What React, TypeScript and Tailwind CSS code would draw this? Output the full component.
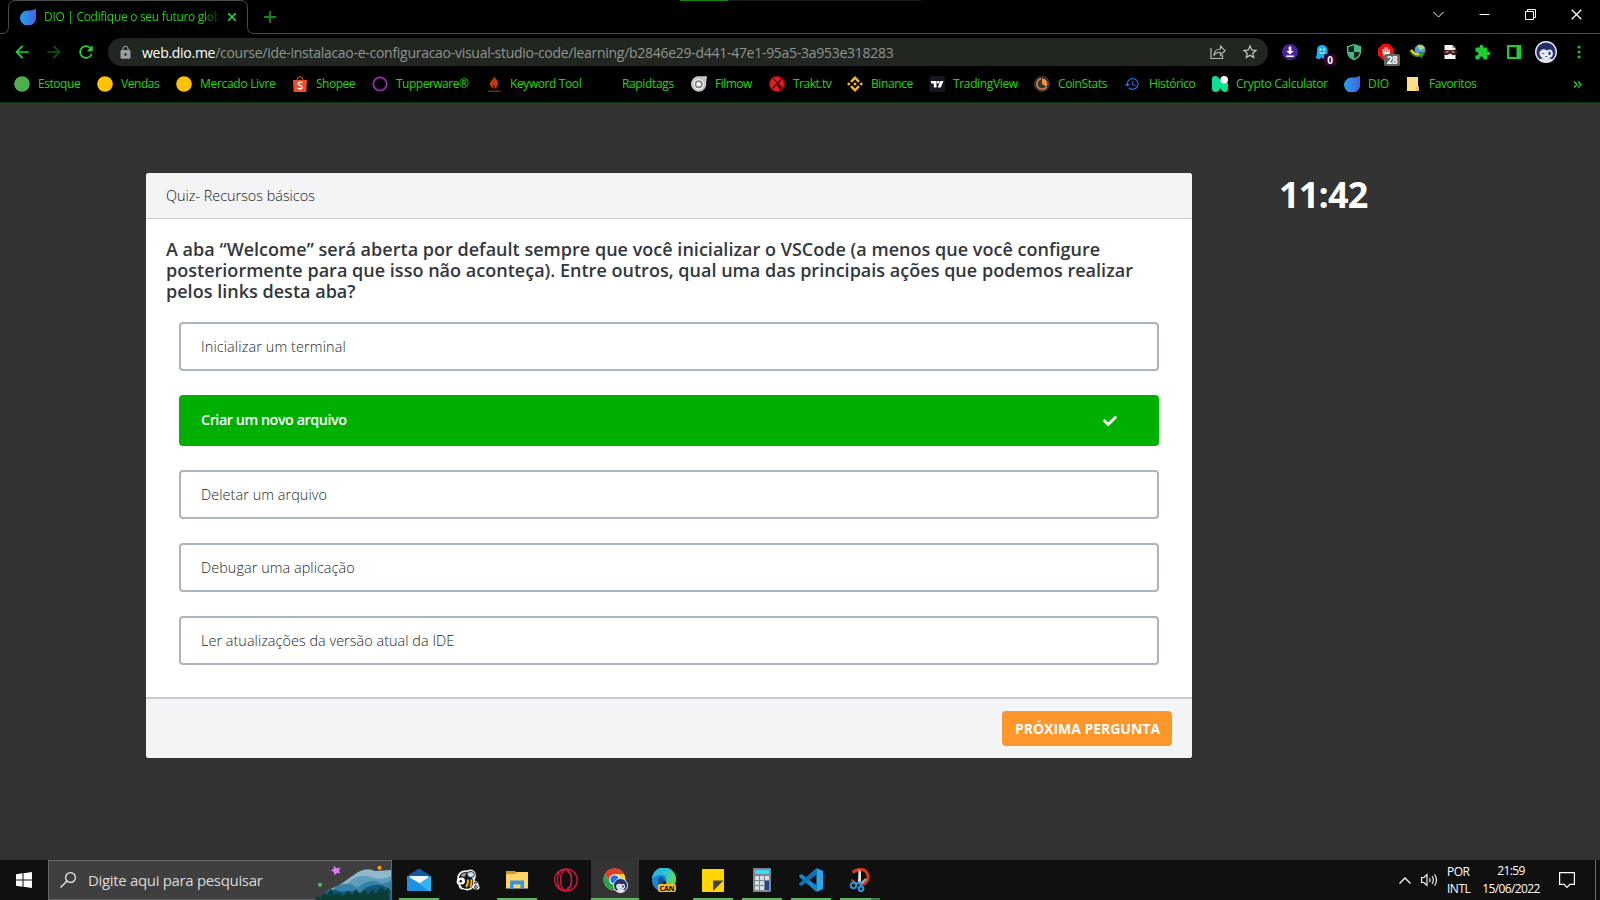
import type { ReactNode } from "react";
import { FaCheck } from "react-icons/fa";
import { MdArrowBack, MdArrowForward, MdExtension, MdHistory, MdLock, MdRefresh, MdStarOutline } from "react-icons/md";
import { SiBinance } from "react-icons/si";

function Drop({ id }: { id: string }) {
  return (
    <svg width="16" height="16" viewBox="0 0 16 16" className="shrink-0">
      <defs>
        <linearGradient id={id} x1="0" x2="1">
          <stop offset="0" stopColor="#1fa2f0" />
          <stop offset="1" stopColor="#4a63dc" />
        </linearGradient>
      </defs>
      <path d="M16 0v8.2a8 7.6 0 1 1-9.6-6.6c2-.4 3 .3 5.200-.3C13.500.8 14.500.1 16 0z" fill={`url(#${id})`} />
    </svg>
  );
}

function Avatar({ size }: { size: number }) {
  return (
    <svg width={size} height={size} viewBox="0 0 22 22">
      <circle cx="11" cy="11" r="10.300" fill="#22306b" stroke="#e6e9f4" strokeWidth="1.400" />
      <path d="M4 18.500Q11 15 18 18.500Q15 21.500 11 21.500Q7 21.500 4 18.500z" fill="#dfe3f0" />
      <path d="M4.500 11Q6 8.500 9 8L12 9.500Q15 7.500 17 9.500Q19 13.500 16.500 16Q12 19 7.500 17Q4 15 4.500 11z" fill="#e9e8f0" />
      <ellipse cx="14.500" cy="12.300" rx="1.200" ry="1.900" fill="#2b3a86" />
      <path d="M6.800 12.800q1.300-1 2.600 0M10.300 15.500h2" stroke="#3a4478" strokeWidth=".9" fill="none" />
    </svg>
  );
}

const circle = (fill: string) => (
  <svg width="16" height="16">
    <circle cx="8" cy="8" r="7.800" fill={fill} />
  </svg>
);

const bookmarks: { label: string; width: string; track: string; icon: ReactNode }[] = [
  { label: "Estoque", width: "w-[83px]", track: "tracking-[-0.45px]", icon: circle("#4caf50") },
  { label: "Vendas", width: "w-[79px]", track: "tracking-[-0.45px]", icon: circle("#ffc107") },
  { label: "Mercado Livre", width: "w-[116px]", track: "tracking-[-0.3px]", icon: circle("#ffc107") },
  {
    label: "Shopee",
    width: "w-[80px]",
    track: "tracking-[-0.5px]",
    icon: (
      <svg width="16" height="16" viewBox="0 0 16 16">
        <path d="M1 4h14l-.7 12H1.700z" fill="#ee4d2d" />
        <path d="M5 4a3 3.400 0 0 1 6 0" fill="none" stroke="#ee4d2d" />
        <path d="M10.300 6.800Q8 5.300 6.300 6.900C5.200 9.600 10.700 9 10.200 11.600Q8.700 14.200 5.500 12" fill="none" stroke="#fff" strokeWidth="1.300" />
      </svg>
    ),
  },
  {
    label: "Tupperware®",
    width: "w-[114px]",
    track: "tracking-[-0.5px]",
    icon: (
      <svg width="16" height="16">
        <circle cx="8" cy="8" r="6.700" fill="none" stroke="#9c27b0" strokeWidth="1.800" />
      </svg>
    ),
  },
  {
    label: "Keyword Tool",
    width: "w-[112px]",
    track: "tracking-[-0.4px]",
    icon: (
      <svg width="16" height="16" viewBox="0 0 16 16">
        <path d="M8.300 0c.3 2.700 3.700 3.800 3.700 7.300 0 2.700-1.500 4.400-3.600 5.700.2-2 .2-3-.7-4.200-.5 1.300-.5 2.600.1 4C4.800 11.500 3.800 9.500 4 7.500 4.300 4.400 7.700 3.500 8.300 0z" fill="#c4390a" />
        <path d="M2 15.200h12.500" stroke="#a83208" strokeWidth="1.100" />
      </svg>
    ),
  },
  { label: "Rapidtags", width: "w-[93px]", track: "tracking-[-0.35px]", icon: null },
  {
    label: "Filmow",
    width: "w-[78px]",
    track: "tracking-[-0.5px]",
    icon: (
      <svg width="16" height="16" viewBox="0 0 16 16">
        <path d="M6 .3h10l-.8 6.500A7.600 7.800 0 1 1 6 .3z" fill="#c6c6c6" />
        <circle cx="7.700" cy="8.300" r="4.600" fill="#808080" stroke="#f5f5f5" strokeWidth="1.200" />
        <circle cx="7.700" cy="8.300" r="2.300" fill="#fff" />
      </svg>
    ),
  },
  {
    label: "Trakt.tv",
    width: "w-[78px]",
    track: "tracking-[-0.5px]",
    icon: (
      <svg width="16" height="16" viewBox="0 0 16 16">
        <circle cx="8" cy="8" r="7.400" fill="#ed1c24" stroke="#9b1016" strokeWidth="1.200" />
        <path d="M4.500 3l5 5 4 4.500M12.500 3L3.500 12.500M8 8.500l4 5" stroke="#47060a" strokeWidth="1.400" fill="none" />
      </svg>
    ),
  },
  { label: "Binance", width: "w-[82px]", track: "tracking-[-0.4px]", icon: <SiBinance size={16} color="#f3ba2f" /> },
  {
    label: "TradingView",
    width: "w-[105px]",
    track: "tracking-[-0.35px]",
    icon: (
      <svg width="16" height="16" viewBox="0 0 16 16">
        <rect width="16" height="16" rx="2.500" fill="#131722" />
        <path d="M2 5h5.500v6.500H4.800V7.600H2zM11.300 5h3.200l-2.700 6.500H8.700z" fill="#fff" />
        <circle cx="9.200" cy="6.300" r="1.300" fill="#fff" />
      </svg>
    ),
  },
  {
    label: "CoinStats",
    width: "w-[91px]",
    track: "tracking-[-0.4px]",
    icon: (
      <svg width="16" height="16" viewBox="0 0 16 16">
        <circle cx="8" cy="8" r="8" fill="#353535" />
        <path d="M8 8V2.600A5.400 5.400 0 0 1 12.600 10.800z" fill="#ff9332" />
        <path d="M7 2.800A5.300 5.300 0 1 0 12.500 11" fill="none" stroke="#f47a3c" strokeWidth="1.500" />
      </svg>
    ),
  },
  { label: "Histórico", width: "w-[87px]", track: "tracking-[-0.4px]", icon: <MdHistory size={16} color="#1a73e8" className="-ml-px" /> },
  {
    label: "Crypto Calculator",
    width: "w-[132px]",
    track: "tracking-[-0.3px]",
    icon: (
      <svg width="16" height="16" viewBox="0 0 16 16">
        <path d="M0 3Q0 0 3 0Q6 0 8 3.500L16 7V13Q16 16 13 16Q10 16 8 12Q7 16 4 16Q0 16 0 13z" fill="#0bdf91" />
        <circle cx="12.200" cy="3.800" r="3.800" fill="#fff" />
      </svg>
    ),
  },
  { label: "DIO", width: "w-[61px]", track: "tracking-[-0.2px]", icon: <Drop id="dio-bookmark" /> },
  {
    label: "Favoritos",
    width: "w-[80px]",
    track: "tracking-[-0.45px]",
    icon: (
      <svg width="16" height="16" viewBox="0 0 16 16">
        <path d="M2 1h11v9.500h1V15H2z" fill="#ffe08a" />
        <path d="M11 15v-3.500l3-1V15z" fill="#f0bd49" />
      </svg>
    ),
  },
];

const extensions: ReactNode[] = [
  <svg key="download" width="16" height="16" viewBox="0 0 16 16">
    <circle cx="8" cy="8" r="8" fill="#4a2298" />
    <path d="M6.700 2.500h2.600v4.500h2.400L8 10.600 4.300 7h2.400zM4.300 11.500h7.400v1.400H4.300z" fill="#fff" />
  </svg>,
  <span key="ghost" className="relative">
    <svg width="16" height="16" viewBox="0 0 16 16">
      <path d="M3 6q.3-5 5-5t5.500 5v9l-2-1.500L9.500 15l-2-1.500L5 15.200 1.500 14Q3 12 3 6z" fill="#15aef0" />
      <circle cx="6.500" cy="5.500" r="1.100" fill="#fff" />
      <circle cx="10.200" cy="5.500" r="1.100" fill="#fff" />
      <path d="M5.500 8.300q2.800 2.700 5.400 0" stroke="#fff" fill="none" />
    </svg>
    <span className="absolute top-[10px] left-[10px] flex h-3 w-3 items-center justify-center rounded-[2px] bg-[#330033] text-[10px] leading-none font-bold text-white">0</span>
  </span>,
  <svg key="shield" width="16" height="16" viewBox="0 0 16 16">
    <path d="M8 .7l6.300 2V8Q14.300 13 8 15.500Q1.700 13 1.700 8V2.700z" fill="#0a2419" stroke="#48c78a" strokeWidth="1.400" />
    <path d="M8 3.500V8H4V4.500zM8 8h4.200q-.2 3.500-4.200 5.200z" fill="#0a2419" />
    <path d="M8 1v7h6V3zM8 8H2q.5 4.500 6 7z" fill="#48b883" />
  </svg>,
  <span key="hand" className="relative">
    <svg width="16" height="16" viewBox="0 0 16 16">
      <path d="M4.700 0h6.600L16 4.700v6.600L11.300 16H4.700L0 11.300V4.700z" fill="#e8100f" />
      <path d="M5.200 8.500V5M7.200 8V3.500M9.200 8V3.500M11.200 9V5" stroke="#fff" strokeWidth="1.300" />
      <path d="M4.600 8h7.300l-1 5H6z" fill="#fff" />
    </svg>
    <span className="absolute top-[10px] left-[6px] flex h-3 w-4 items-center justify-center rounded-[2px] bg-[#666] text-[10px] leading-none font-bold tracking-[-0.4px] text-white">28</span>
  </span>,
  <svg key="globe" width="16" height="16" viewBox="0 0 16 16">
    <circle cx="10" cy="6" r="5.500" fill="#4f9be5" />
    <path d="M8 .8q5-.5 6.500 3L11 6.500 8 4z" fill="#a9d96b" />
    <path d="M1 6q4 7 12 4" stroke="#e9d23f" strokeWidth="2.600" fill="none" />
    <path d="M.5 8q5 7 12 2.500" stroke="#3c7f2e" strokeWidth="1.500" fill="none" />
    <path d="M8.500 8.500l6.500-1-3.500 7z" fill="#2d952b" />
  </svg>,
  <svg key="mask" width="16" height="16" viewBox="0 0 16 16">
    <path d="M2.500 1h8l3 3v11h-11z" fill="#f4f4f4" />
    <path d="M10.500 1v3h3z" fill="#888" />
    <path d="M.8 5.500q7 1.500 14.400 0v4.300q-2.500 2.500-5.500.7L8 9.500l-1.700 1Q3 12 .8 9.800z" fill="#3b1414" />
    <path d="M3.500 8h3M9.500 8h3" stroke="#e8dcdc" strokeWidth="1.200" />
  </svg>,
  <MdExtension key="puzzle" size={17} color="#1dce32" />,
  <svg key="panel" width="14" height="14">
    <path d="M0 0h14v14H0zM2 2v10h7.500V2z" fill="#1dce32" fillRule="evenodd" />
  </svg>,
  <Avatar key="avatar" size={22} />,
  <svg key="dots" width="4" height="14" fill="#14be28" className="ml-px">
    <circle cx="2" cy="2" r="1.600" />
    <circle cx="2" cy="7" r="1.600" />
    <circle cx="2" cy="12" r="1.600" />
  </svg>,
];

const options = [
  { text: "Inicializar um terminal", track: "tracking-[0.13px]", correct: false },
  { text: "Criar um novo arquivo", track: "", correct: true },
  { text: "Deletar um arquivo", track: "tracking-[0.08px]", correct: false },
  { text: "Debugar uma aplicação", track: "tracking-[0.07px]", correct: false },
  { text: "Ler atualizações da versão atual da IDE", track: "tracking-[0.05px]", correct: false },
];

const apps: { name: string; open: boolean; icon: ReactNode }[] = [
  {
    name: "mail",
    open: true,
    icon: (
      <svg width="24" height="24" viewBox="0 0 24 24">
        <path d="M0 8L12 .5 24 8v4H0z" fill="#0f5aa6" />
        <path d="M2.500 8h19v8h-19z" fill="#f3f6f8" />
        <path d="M0 8l13 7.500L24 8v15H0z" fill="#1c93e2" />
        <path d="M24 8L12 15.500 22 23h2z" fill="#34b4f1" />
      </svg>
    ),
  },
  {
    name: "bee",
    open: false,
    icon: (
      <svg width="26" height="24" viewBox="0 0 26 24">
        <path d="M4 5Q7 1.500 12 2.500Q17 0 20 4Q22 8 19.500 12.500Q24 14 23.500 17Q26 20 23 21.500Q20 22 18 20Q14 24 9 21.500Q4 22 3.500 17Q.5 15 2 12Q1.500 8 4 5z" fill="#f0f0f0" />
        <path d="M4 9Q6 3.500 12 4L18 11.500Q19 17 16 19.500Q12 22 7 19.500Q4 15 4 9z" fill="#161616" />
        <path d="M5.500 8q2.500-4 6-3l-2 4z" fill="#9b9b9b" />
        <circle cx="6.500" cy="13" r="3.500" fill="#fff" />
        <circle cx="5.800" cy="13.300" r="1.300" fill="#111" />
        <ellipse cx="15.800" cy="6.500" rx="3.600" ry="3" fill="#c9dff0" stroke="#222" />
        <path d="M12.800 11.500q.8 4-1.800 7.500M16.300 11.500q.8 4-1 7.500" stroke="#f4b81c" strokeWidth="1.900" fill="none" />
        <circle cx="21" cy="19" r="1.400" fill="#fff" stroke="#222" />
        <circle cx="20.500" cy="14.800" r="1" fill="#fff" stroke="#222" />
      </svg>
    ),
  },
  {
    name: "files",
    open: true,
    icon: (
      <svg width="22" height="20" viewBox="0 0 22 20">
        <path d="M0 1h9l2 2v4H0z" fill="#d99a10" />
        <path d="M0 4h9l2-2h11v16.500H0z" fill="#ffd569" />
        <path d="M4 19v-8.500h14V19h-3.500v-4.500h-7V19z" fill="#3a95dd" />
      </svg>
    ),
  },
  {
    name: "opera",
    open: false,
    icon: (
      <svg width="24" height="24" viewBox="0 0 24 24" fill="none" stroke="#d6183f" strokeWidth="1.300">
        <circle cx="12" cy="12" r="11.200" />
        <ellipse cx="12" cy="12" rx="5.500" ry="10.500" />
        <path d="M13 3.500q4.500 1 4.500 8.500T13 20.500M9 1.500Q3.500 4 3.500 12T9 22.500" />
      </svg>
    ),
  },
  {
    name: "chrome",
    open: true,
    icon: (
      <span className="relative block h-6 w-6">
        <svg width="24" height="24" viewBox="0 0 24 24">
          <circle cx="11.500" cy="11.500" r="11" fill="#ffcd40" />
          <path d="M1.970 6A11 11 0 0 1 21.030 6H11.500L7 14z" fill="#e33b2e" />
          <path d="M1.970 6A11 11 0 0 0 10.500 22.500L16 14l-9 0z" fill="#2ba14b" />
          <circle cx="11.500" cy="11.500" r="5.300" fill="#fff" />
          <circle cx="11.500" cy="11.500" r="4.200" fill="#1a73e8" />
        </svg>
        <span className="absolute top-[10px] left-[10px]">
          <Avatar size={15} />
        </span>
      </span>
    ),
  },
  {
    name: "edge",
    open: false,
    icon: (
      <span className="relative block h-6 w-6">
        <svg width="24" height="24" viewBox="0 0 24 24">
          <defs>
            <linearGradient id="edge-wave" x1="0" y1="0" x2="1" y2=".6">
              <stop offset="0" stopColor="#2fa8ea" />
              <stop offset=".55" stopColor="#2dc4d4" />
              <stop offset="1" stopColor="#62d84e" />
            </linearGradient>
          </defs>
          <circle cx="12" cy="12" r="12" fill="#1c86d6" />
          <path d="M6 12Q5 20 12 24Q18 24 21 20Q12 20 12 13Q12 9 9 8.500Q6.500 9 6 12z" fill="#0f52a0" />
          <path d="M0 11A12 12 0 0 1 24 11.500Q24 17 18 17Q13 17 14 14Q16 8 10 7Q3 6.500 0 11z" fill="url(#edge-wave)" />
          <path d="M14.200 13q-1.500 2.500 1.300 4H12q-2-5 2.200-4z" fill="#101010" />
        </svg>
        <span className="absolute top-[16px] left-[6px] flex h-2 w-[18px] items-center justify-center rounded-[2px] bg-[#ffb923] text-[7px] leading-none font-bold text-black">CAN</span>
      </span>
    ),
  },
  {
    name: "notes",
    open: true,
    icon: (
      <svg width="22" height="23" viewBox="0 0 22 23">
        <rect width="22" height="23" rx="1" fill="#ffd600" />
        <path d="M11 11.500h10.500L11 22z" fill="#44443c" />
      </svg>
    ),
  },
  {
    name: "calculator",
    open: true,
    icon: (
      <svg width="18" height="24" viewBox="0 0 18 24">
        <rect width="18" height="24" rx="1" fill="#7d8790" />
        <rect x="2" y="2" width="14" height="4" fill="#46d5f6" />
        <path d="M2 8h4v4H2zM7 8h4v4H7zM12 8h4v4h-4zM2 13h4v4H2zM7 13h4v4H7zM2 18h4v4H2zM7 18h4v4H7z" fill="#d7dee3" />
        <path d="M12 13h4v9h-4z" fill="#1a4a8c" />
      </svg>
    ),
  },
  {
    name: "code",
    open: true,
    icon: (
      <svg width="24" height="24" viewBox="0 0 24 24">
        <path d="M17.500 24v-6.500L2.500 6 .2 7.500v1.300z" fill="#128bd6" />
        <path d="M17.500 0v6.500L2.500 18 .2 16.500v-1.300z" fill="#0a72ba" />
        <path d="M17.500 0L24 3v18l-6.500 3z" fill="#2ba3ef" />
      </svg>
    ),
  },
  {
    name: "snip",
    open: true,
    icon: (
      <svg width="22" height="24" viewBox="0 0 22 24">
        <path d="M3.500 4.500Q10-.5 16 2.500Q21 7 18 13Q16 16.500 11 16.500" stroke="#d63a15" strokeWidth="3" fill="none" />
        <path d="M9.500 1.500l2.500 2v11h-3z" fill="#dce2e5" />
        <path d="M3 11l5.500 4L8 17 2 12.500z" fill="#c5482a" />
        <path d="M16.500 10L10 16l1.500 1.500L17.500 12z" fill="#a9b2b7" />
        <g fill="none" stroke="#2a93dc" strokeWidth="2">
          <circle cx="4.500" cy="17.500" r="2.700" />
          <circle cx="12" cy="20.800" r="2.300" />
          <path d="M7 16l4-1.500 1.500 4" />
        </g>
      </svg>
    ),
  },
];

function Browser() {
  return (
    <header className="h-[103px] shrink-0 border-b border-[#0c3a0e] bg-black text-[12px] text-[#22d80d]">
      <div className="relative flex h-[34px] border-b border-[#4b4b4b]">
        <div className="absolute top-0 left-[680px] flex h-px w-[241px] bg-[#1c1c1c]">
          <div className="w-[48px] bg-[#0d850f]" />
        </div>
        <svg width="256" height="34" className="absolute top-0 left-0" fill="none">
          <path d="M0 33.500H2q6.500 0 6.500-7V8q0-7.500 7.500-7.500h224q7.500 0 7.500 7.500v18.500q0 7 7 7H256V40H0z" fill="#000" stroke="#4b4b4b" />
        </svg>
        <div className="relative flex h-[34px] w-[248px] items-center pl-5">
          <Drop id="dio-tab" />
          <span className="ml-2 w-[176px] overflow-hidden bg-gradient-to-r from-[#22d80d] from-[90%] to-transparent to-[101%] bg-clip-text tracking-[-0.3px] whitespace-nowrap text-transparent">DIO | Codifique o seu futuro glob</span>
          <svg width="8" height="8" className="ml-[8px]" stroke="#1dd62b" strokeWidth="1.600">
            <path d="M0 0l8 8M8 0L0 8" />
          </svg>
        </div>
        <svg width="12" height="12" className="mt-[11px] ml-4" stroke="#0e8a18" strokeWidth="1.800">
          <path d="M6 0v12M0 6h12" />
        </svg>
        <div className="mr-px ml-auto flex h-[28px] items-center text-white">
          {[
            <path key="v" d="M.5 3l5 5 5-5" strokeWidth="1" />,
            <path key="m" d="M.5 5.500h10" />,
            <path key="r" d="M.5 2.500h8v8h-8zM2.500 2.500V.5h8v8H8.500" />,
            <path key="x" d="M.7.7l9.600 9.600M10.300.7L.7 10.300" strokeWidth="1.300" />,
          ].map((shape, i) => (
            <span key={i} className="flex w-[46px] justify-center">
              <svg width="11" height="11" fill="none" stroke="currentColor">{shape}</svg>
            </span>
          ))}
        </div>
      </div>

      <div className="flex h-[36px] items-center pl-[12px]">
        <MdArrowBack size={20} color="#1fd62c" />
        <MdArrowForward size={20} color="#0b5714" className="ml-[12px]" />
        <MdRefresh size={20} color="#1fd62c" className="ml-[12px]" />
        <div className="ml-[12px] flex h-[28px] w-[1160px] items-center rounded-full bg-[#212720] pl-[10px]">
          <MdLock size={15} color="#9aa0a6" />
          <span className="ml-[9px] text-[14px] tracking-[-0.28px] whitespace-nowrap text-[#8f948f]">
            <span className="text-white">web.dio.me</span>/course/ide-instalacao-e-configuracao-visual-studio-code/learning/b2846e29-d441-47e1-95a5-3a953e318283
          </span>
          <svg width="16" height="16" viewBox="0 0 16 16" className="ml-auto" fill="none" stroke="#b4b8b4" strokeWidth="1.200">
            <path d="M1 4v10.500h11.500V11M4 11q.5-6 6.500-6V2l4.500 4.700-4.500 4.600V8.500Q6.500 8 4 11z" />
          </svg>
          <MdStarOutline size={18} color="#c4c8c4" className="mr-[9px] ml-[15px]" />
        </div>
        <div className="ml-[6px] flex">
          {extensions.map((icon, i) => (
            <span key={i} className="flex h-[22px] w-8 items-center justify-center">{icon}</span>
          ))}
        </div>
      </div>

      <nav className="flex h-[28px] items-center pl-[14px]">
        {bookmarks.map((b) => (
          <span key={b.label} className={`flex shrink-0 items-center ${b.width}`}>
            <span className="flex h-4 w-4 shrink-0">{b.icon}</span>
            <span className={`ml-2 whitespace-nowrap ${b.track}`}>{b.label}</span>
          </span>
        ))}
        <svg width="9" height="7" className="mr-[18px] ml-auto" fill="none" stroke="#1cc71f" strokeWidth="1.500">
          <path d="M1 .5l3 3-3 3M5 .5l3 3-3 3" />
        </svg>
      </nav>
    </header>
  );
}

function Quiz() {
  return (
    <main className="flex grow items-start bg-[#333] pt-[70px] pl-[146px] font-['Open_Sans',sans-serif]">
      <section className="w-[1046px] overflow-hidden rounded-[3px] bg-white">
        <div className="flex h-[46px] items-center border-b border-[#c8ccd1] bg-[#f3f4f6] px-5 text-[14.400px] font-light text-[#111417]">Quiz- Recursos básicos</div>
        <div className="px-5 pt-[20px] pb-[32px]">
          <h1 className="text-[18px] leading-[21px] font-semibold tracking-[0.02px] whitespace-nowrap text-[#32373d]">
            A aba “Welcome” será aberta por default sempre que você inicializar o VSCode (a menos que você configure
            <br />
            posteriormente para que isso não aconteça). Entre outros, qual uma das principais ações que podemos realizar
            <br />
            pelos links desta aba?
          </h1>
          <div className="mt-[20px] flex flex-col gap-6 px-[13px]">
            {options.map((o) =>
              o.correct ? (
                <div key={o.text} className="flex h-[51px] items-center justify-between rounded-[4px] bg-[#00b000] pr-[42px] pl-[22px] text-[14.400px] font-semibold tracking-[-0.48px] text-white">
                  <span className="pb-[2px]">{o.text}</span>
                  <FaCheck size={14} />
                </div>
              ) : (
                <div key={o.text} className={`flex h-[49px] items-center rounded-[4px] border-2 border-[#abb3bb] pl-5 text-[14.400px] font-light text-[#22262a] ${o.track}`}>
                  {o.text}
                </div>
              ),
            )}
          </div>
        </div>
        <div className="flex h-[61px] items-center justify-end border-t-2 border-[#c8ccd1] bg-[#f3f4f6] pr-5">
          <button className="h-[35px] w-[170px] rounded-[4px] bg-[#fd962b] pl-px text-[14px] font-bold tracking-[-0.02px] whitespace-nowrap text-white">PRÓXIMA PERGUNTA</button>
        </div>
      </section>
      <div className="ml-[87px] pt-px text-[36px] leading-[42px] font-bold tracking-[-0.8px] text-white">11:42</div>
    </main>
  );
}

function Taskbar() {
  return (
    <footer className="flex h-10 shrink-0 bg-[#101010] text-white">
      <div className="flex w-12 items-center justify-center">
        <svg width="16" height="16" fill="#fff">
          <path d="M0 2.200L6.500 1.300V7.500H0zM7.500 1.200L16 0v7.500H7.500zM0 8.500h6.500v6.200L0 13.800zM7.500 8.500H16V16l-8.500-1.200z" />
        </svg>
      </div>
      <div className="relative flex w-[344px] items-center border border-[#666] bg-[#3f3f3f] pl-[11px]">
        <svg width="16" height="16" fill="none" stroke="#f0f0f0" strokeWidth="1.200">
          <circle cx="10.500" cy="5.500" r="4.900" />
          <path d="M7 9L.5 15.500" />
        </svg>
        <span className="ml-[12px] text-[15px] tracking-[-0.33px] whitespace-nowrap text-[#d9d9d9]">Digite aqui para pesquisar</span>
        <svg width="76" height="39" className="absolute right-0 bottom-[-1px]">
          <path d="M8 33Q17 26 23 25L43 11Q52 6 60 10L76 9V39H8z" fill="#8fb9cb" />
          <path d="M29 25Q42 12 53 15Q66 21 76 15V39H15z" fill="#5f9cc0" />
          <path d="M20 26Q34 19 42 27Q57 15 66 23L76 20V39H10z" fill="#3482a5" />
          <path d="M9 32Q16 26 26 31Q36 28 44 32Q60 17 76 29V39H5z" fill="#12557d" />
          <path d="M0 39l2-4 3 2 4-5 3 3 4-8 3 7 5-3 4 4 5-5 4 4 4-6 4 5 5-4 3 4 5-5 3 5 5-7 4 4 4-4v13z" fill="#0a3d36" />
          <path d="M19 4.500l2.200 2.700 3.800-.7-.8 3L25 12.300l-3-.3-2.500 2.200-.7-3.200L16 9.300l2.700-1.500z" fill="#df7cf5" />
          <circle cx="64.500" cy="6.700" r="2" fill="#f4a80a" />
          <circle cx="5" cy="23.700" r="2" fill="#46c965" />
        </svg>
      </div>
      <div className="flex gap-px pl-[3px]">
        {apps.map((app) => (
          <div key={app.name} className={app.name === "chrome" ? "flex w-12 flex-col items-center bg-[#343434]" : "flex w-12 flex-col items-center"}>
            <div className="flex h-[38px] items-center justify-center pt-[2px]">{app.icon}</div>
            {app.open && (
              <div className={app.name === "chrome" ? "h-[2px] w-12 bg-[#5cb85c]" : "flex h-[2px] w-10 justify-end bg-[#5cb85c]"}>
                {app.name === "snip" && <div className="w-[9px] bg-[#3f7f41]" />}
              </div>
            )}
          </div>
        ))}
      </div>
      <div className="ml-auto flex items-center text-[12px] leading-[17px]">
        <svg width="12" height="7" fill="none" stroke="#fff" strokeWidth="1.300" className="mr-[10px]">
          <path d="M.5 6.500L6 1l5.500 5.500" />
        </svg>
        <svg width="17" height="14" fill="none" stroke="#fff" strokeWidth="1.100">
          <path d="M.6 4.500H3L6 1.500v11L3 9.500H.6zM8.500 5q1.300 2 0 4M11 3q2.700 4 0 8M13.500 1.200q4 5.800 0 11.600" />
        </svg>
        <div className="ml-[9px] w-[24px] tracking-[-0.5px] whitespace-nowrap">
          <div>POR</div>
          <div>INTL</div>
        </div>
        <div className="ml-[10px] w-[60px] text-center tracking-[-0.63px] whitespace-nowrap">
          <div className="-mt-px mb-px">21:59</div>
          <div>15/06/2022</div>
        </div>
        <svg width="16" height="17" fill="none" stroke="#fff" strokeWidth="1.200" className="ml-[18px]">
          <path d="M.6.6h14.800v11.800H11L8 15.400 5 12.400H.6z" />
        </svg>
        <div className="mr-1 ml-[20px] h-10 w-px bg-[#6a6a6a]" />
      </div>
    </footer>
  );
}

export default function App() {
  return (
    <div className="flex h-[900px] w-[1600px] flex-col overflow-hidden font-['Open_Sans',sans-serif]">
      <Browser />
      <Quiz />
      <Taskbar />
    </div>
  );
}
